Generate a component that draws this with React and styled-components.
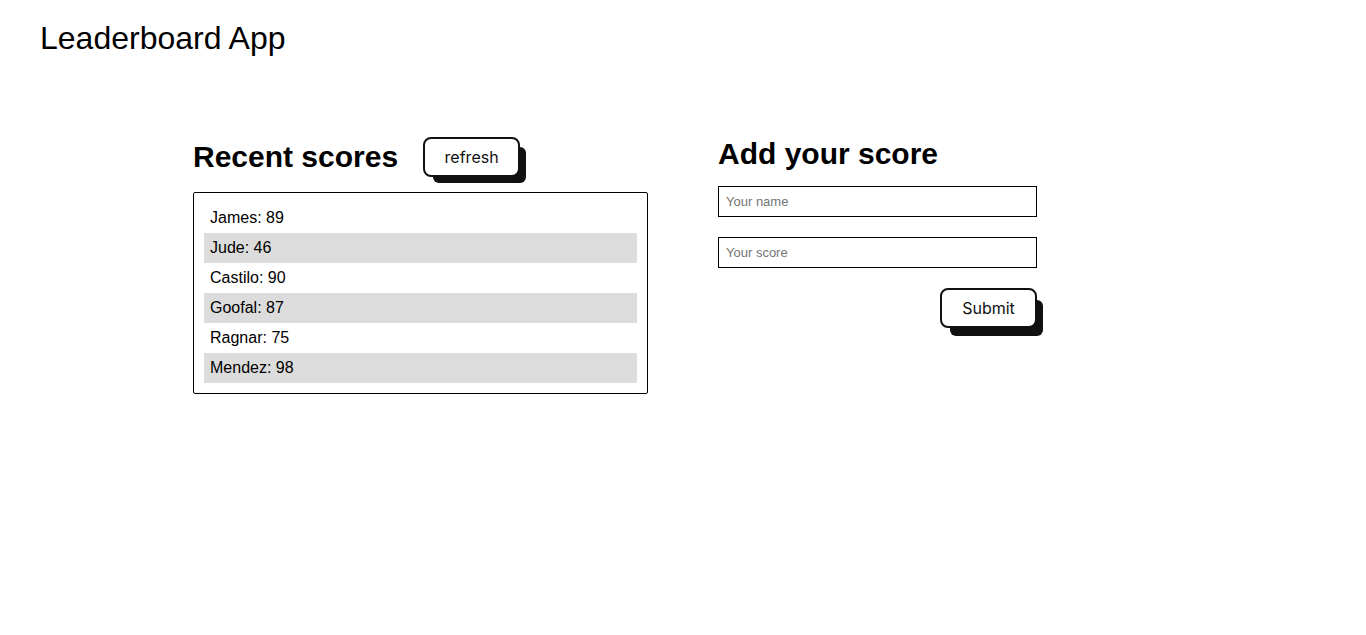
import React from "react";
import styled, { createGlobalStyle } from "styled-components";

const GlobalStyle = createGlobalStyle`
  body {
    margin: 0;
    background: #fff;
    font-family: "Liberation Sans", Arial, sans-serif;
    color: #000;
  }
`;

const Header = styled.header`
  padding: 20px 40px 0;
`;

const Title = styled.h1`
  margin: 0;
  font-size: 32px;
  font-weight: 400;
  line-height: 37px;
`;

const Main = styled.main`
  display: flex;
  gap: 70px;
  padding: 80px 0 0 193px;
`;

const Scores = styled.section`
  width: 455px;
`;

const HeadRow = styled.div`
  display: flex;
  align-items: center;
  gap: 25px;
  margin-bottom: 15px;
`;

const Heading = styled.h2`
  margin: 0;
  font-size: 30px;
  font-weight: 700;
  line-height: 40px;
`;

const Button = styled.button`
  width: 97px;
  height: 40px;
  background: #fff;
  border: 2px solid #111;
  border-radius: 8px;
  box-shadow: ${({ $dx = 8 }) => $dx}px ${({ $dy = 8 }) => $dy}px 0 -2px #111;
  font-family: Inter, "Noto Sans", sans-serif;
  font-size: 16px;
  color: #111;
  cursor: pointer;
`;

const List = styled.ul`
  list-style: none;
  margin: 0;
  padding: 10px;
  border: 1px solid #000;
  border-radius: 2px;
`;

const Item = styled.li`
  height: 30px;
  line-height: 30px;
  padding: 0 6px;
  font-size: 16px;
  background: ${({ $shade }) => ($shade ? "#dcdcdc" : "transparent")};
`;

const Form = styled.form`
  width: 325px;
  display: flex;
  flex-direction: column;
`;

const FormHeading = styled(Heading)`
  margin-bottom: 15px;
  line-height: 34px;
`;

const Input = styled.input`
  box-sizing: border-box;
  width: 319px;
  height: 31px;
  margin-bottom: 20px;
  padding: 0 7px;
  border: 1px solid #000;
  border-radius: 0;
  font-family: "Liberation Sans", Arial, sans-serif;
  font-size: 13px;

  &::placeholder {
    color: #757575;
  }
`;

const SubmitRow = styled.div`
  width: 319px;
  display: flex;
  justify-content: flex-end;
`;

const scores = [
  { name: "James", score: 89 },
  { name: "Jude", score: 46 },
  { name: "Castilo", score: 90 },
  { name: "Goofal", score: 87 },
  { name: "Ragnar", score: 75 },
  { name: "Mendez", score: 98 },
];

const App = () => (
  <>
    <GlobalStyle />
    <Header>
      <Title>Leaderboard App</Title>
    </Header>
    <Main>
      <Scores>
        <HeadRow>
          <Heading>Recent scores</Heading>
          <Button type="button" $dx={8} $dy={8}>
            refresh
          </Button>
        </HeadRow>
        <List>
          {scores.map((s, idx) => (
            <Item key={s.name} $shade={idx % 2 === 1}>
              {s.name}: {s.score}
            </Item>
          ))}
        </List>
      </Scores>
      <Form onSubmit={(e) => e.preventDefault()}>
        <FormHeading>Add your score</FormHeading>
        <Input type="text" placeholder="Your name" />
        <Input type="number" placeholder="Your score" />
        <SubmitRow>
          <Button type="submit" $dx={8} $dy={10}>
            Submit
          </Button>
        </SubmitRow>
      </Form>
    </Main>
  </>
);

export default App;
